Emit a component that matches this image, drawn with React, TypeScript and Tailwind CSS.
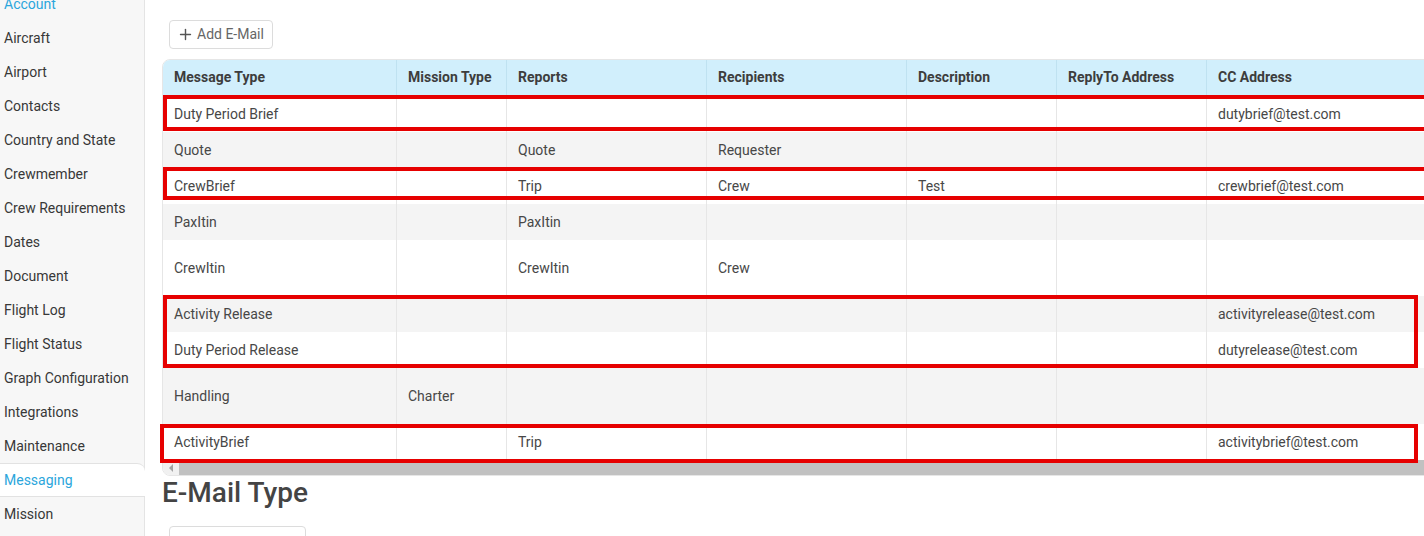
import { Plus } from 'lucide-react';

const navItems = [
  'Account',
  'Aircraft',
  'Airport',
  'Contacts',
  'Country and State',
  'Crewmember',
  'Crew Requirements',
  'Dates',
  'Document',
  'Flight Log',
  'Flight Status',
  'Graph Configuration',
  'Integrations',
  'Maintenance',
  'Messaging',
  'Mission',
];

const columns = [
  'Message Type',
  'Mission Type',
  'Reports',
  'Recipients',
  'Description',
  'ReplyTo Address',
  'CC Address',
];

interface Row {
  cells: string[];
  tall?: boolean;
}

const rows: Row[] = [
  { cells: ['Duty Period Brief', '', '', '', '', '', 'dutybrief@test.com'] },
  { cells: ['Quote', '', 'Quote', 'Requester', '', '', ''] },
  { cells: ['CrewBrief', '', 'Trip', 'Crew', 'Test', '', 'crewbrief@test.com'] },
  { cells: ['PaxItin', '', 'PaxItin', '', '', '', ''] },
  { cells: ['CrewItin', '', 'CrewItin', 'Crew', '', '', ''], tall: true },
  { cells: ['Activity Release', '', '', '', '', '', 'activityrelease@test.com'] },
  { cells: ['Duty Period Release', '', '', '', '', '', 'dutyrelease@test.com'] },
  { cells: ['Handling', 'Charter', '', '', '', '', ''], tall: true },
  { cells: ['ActivityBrief', '', 'Trip', '', '', '', 'activitybrief@test.com'] },
];

// first column is 1px narrower to make up for the container's left border
const gridCols = 'grid grid-cols-[233px_110px_200px_200px_150px_150px_250px]';

function Sidebar() {
  return (
    <aside className="w-[145px] shrink-0 bg-[#f7f7f7] border-r border-[#e4e4e4] h-full">
      <ul className="-mt-[13px]">
        {navItems.map((item) => {
          const active = item === 'Messaging';
          return (
            <li
              key={item}
              className={`h-[34px] flex items-center pl-[4px] text-[14px] ${
                active
                  ? 'bg-white text-[#2ba6dc] border-y border-[#e2e2e2] rounded-tr-[8px] -mr-px'
                  : item === 'Account'
                    ? 'text-[#2ba6dc]'
                    : 'text-[#383838]'
              }`}
            >
              {item}
            </li>
          );
        })}
      </ul>
    </aside>
  );
}

function MessagesTable() {
  return (
    <div className="relative">
      <div className="w-[1300px] rounded-l-[8px] border border-[#e6e6e6] overflow-hidden">
        {/* Header */}
        <div className={`${gridCols} h-[36px] bg-[#d1effc] border-b border-[#c9e6f3]`}>
          {columns.map((col, i) => (
            <div
              key={col}
              className={`flex items-center text-[14px] font-bold text-[#3d3d3d] ${
                i > 0 ? 'border-l border-[#bfe2f1] pl-[11px]' : 'pl-[11px]'
              }`}
            >
              {col}
            </div>
          ))}
        </div>

        {/* Body */}
        {rows.map((row, r) => (
          <div
            key={r}
            className={`${gridCols} ${row.tall ? 'h-[56px]' : 'h-[36px]'} ${
              r % 2 === 1 ? 'bg-[#f4f4f4]' : 'bg-white'
            }`}
          >
            {row.cells.map((cell, c) => (
              <div
                key={c}
                className={`flex items-center pl-[11px] text-[14px] text-[#474747] ${
                  c > 0 ? 'border-l border-[#e6e6e6]' : ''
                }`}
              >
                {cell}
              </div>
            ))}
          </div>
        ))}

        {/* Horizontal scrollbar */}
        <div className="flex h-[15px] bg-[#f1f1f1]">
          <div className="w-[16px] flex items-center justify-center">
            <span className="block w-0 h-0 border-y-[4px] border-y-transparent border-r-[4px] border-r-[#a3a3a3]" />
          </div>
          <div className="flex-1 bg-[#c1c1c1]" />
        </div>
      </div>

      {/* Highlight boxes */}
      <div className="absolute left-[1px] top-[36px] h-[36px] w-[1300px] border-[4px] border-[#e60000] pointer-events-none" />
      <div className="absolute left-[1px] top-[108px] h-[33px] w-[1300px] border-[4px] border-[#e60000] pointer-events-none" />
      <div className="absolute left-[1px] top-[236px] h-[73px] w-[1255px] border-[4px] border-[#e60000] pointer-events-none" />
      <div className="absolute -left-[2px] top-[365px] h-[39px] w-[1258px] border-[4px] border-[#e60000] pointer-events-none" />
    </div>
  );
}

export default function App() {
  return (
    <div
      className="w-[1424px] h-[536px] overflow-hidden flex bg-white"
      style={{ fontFamily: 'Roboto, "Noto Sans", sans-serif' }}
    >
      <Sidebar />
      <main className="flex-1 min-w-0 pl-[17px] pt-[20px]">
        <button className="ml-[7px] h-[29px] pl-[7px] pr-[8px] flex items-center gap-[3px] border border-[#dcdcdc] rounded-[4px] bg-white text-[14px] text-[#666]">
          <Plus size={17} strokeWidth={2} className="text-[#555]" />
          Add E-Mail
        </button>
        <div className="mt-[10px]">
          <MessagesTable />
        </div>
        <h2 className="text-[28px] leading-[34px] font-medium text-[#444] mt-0">
          E-Mail Type
        </h2>
        <button className="ml-[7px] mt-[16px] h-[29px] w-[137px] border border-[#dcdcdc] rounded-[4px] bg-white" />
      </main>
    </div>
  );
}
